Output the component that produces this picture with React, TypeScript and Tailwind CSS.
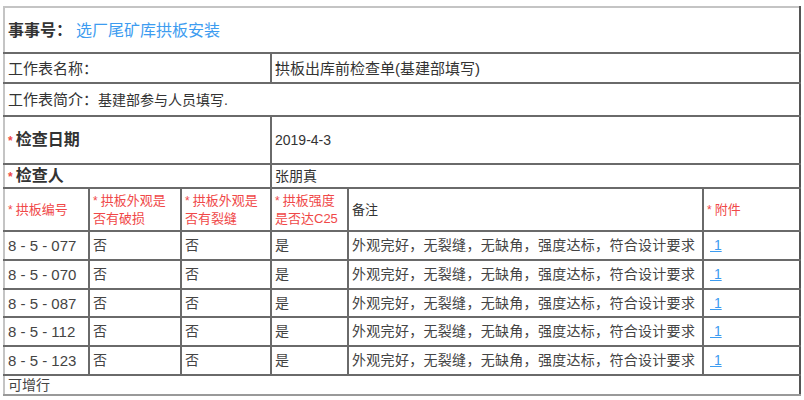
const rows = [
  { code: '8 - 5 - 077', h: 'h-[29px]' },
  { code: '8 - 5 - 070', h: 'h-[29px]' },
  { code: '8 - 5 - 087', h: 'h-[28px]' },
  { code: '8 - 5 - 112', h: 'h-[29px]' },
  { code: '8 - 5 - 123', h: 'h-[29px]' },
]

const note = '外观完好，无裂缝，无缺角，强度达标，符合设计要求'

function Star() {
  return <span className="mr-[3px] text-[12px] text-[#f04848]">*</span>
}

const cell = 'border-2 border-[#6a6a6a] px-[3px] align-middle'

function TwoLine({ a, b }: { a: string; b: string }) {
  return (
    <>
      <div className="whitespace-nowrap">
        <Star />
        {a}
      </div>
      <div className="whitespace-nowrap">{b}</div>
    </>
  )
}

export default function App() {
  return (
    <div
      className="h-[400px] w-[804px] overflow-hidden bg-white pl-[3px] pt-[6px] text-[#333]"
      style={{ fontFamily: '"Liberation Sans", "Noto Sans CJK SC", sans-serif' }}
    >
      <table className="w-[796px] table-fixed border-collapse border-t-2 border-l-2 border-t-[#c4c4c4] border-l-[#c4c4c4] text-[14px] leading-[17px]">
        <colgroup>
          <col className="w-[85px]" />
          <col className="w-[92px]" />
          <col className="w-[90px]" />
          <col className="w-[77px]" />
          <col className="w-[355px]" />
          <col className="w-[97px]" />
        </colgroup>
        <tbody>
          <tr className="h-[46px]">
            <td colSpan={6} className={`${cell} border-t-[#c4c4c4] border-l-[#c4c4c4] border-r-[#555] text-[16px]`}>
              <span className="font-semibold text-[#333]">事事号：</span>
              <span className="ml-[4px] text-[#3d9cf0]">选厂尾矿库拱板安装</span>
            </td>
          </tr>
          <tr className="h-[30px]">
            <td colSpan={3} className={`${cell} border-l-[#c4c4c4] text-[15px]`}>工作表名称：</td>
            <td colSpan={3} className={`${cell} border-r-[#555] text-[15px]`}>拱板出库前检查单(基建部填写)</td>
          </tr>
          <tr className="h-[33px]">
            <td colSpan={6} className={`${cell} border-l-[#c4c4c4] border-r-[#555]`}>
              <span className="text-[15px]">工作表简介：</span>基建部参与人员填写.
            </td>
          </tr>
          <tr className="h-[48px]">
            <td colSpan={3} className={`${cell} border-l-[#c4c4c4] text-[16px] font-bold`}>
              <Star />检查日期
            </td>
            <td colSpan={3} className={`${cell} border-r-[#555]`}>2019-4-3</td>
          </tr>
          <tr className="h-[24px]">
            <td colSpan={3} className={`${cell} border-l-[#c4c4c4] text-[16px] font-bold`}>
              <Star />检查人
            </td>
            <td colSpan={3} className={`${cell} border-r-[#555]`}>张朋真</td>
          </tr>
          <tr className="h-[43px] text-[13px] leading-[18px] text-[#f04848]">
            <td className={`${cell} border-l-[#c4c4c4]`}>
              <Star />拱板编号
            </td>
            <td className={cell}>
              <TwoLine a="拱板外观是" b="否有破损" />
            </td>
            <td className={cell}>
              <TwoLine a="拱板外观是" b="否有裂缝" />
            </td>
            <td className={cell}>
              <TwoLine a="拱板强度" b="是否达C25" />
            </td>
            <td className={`${cell} text-[#333]`}>备注</td>
            <td className={`${cell} border-r-[#555]`}>
              <Star />附件
            </td>
          </tr>
          {rows.map((r) => (
            <tr key={r.code} className={`${r.h} text-[#444]`}>
              <td className={`${cell} border-l-[#c4c4c4] text-[15px]`}>{r.code}</td>
              <td className={cell}>否</td>
              <td className={cell}>否</td>
              <td className={cell}>是</td>
              <td className={`${cell} whitespace-nowrap tracking-[0.3px]`}>{note}</td>
              <td className={`${cell} border-r-[#555] pl-[6px]`}>
                <a href="#" className="text-[#3d9cf0] underline">
                  &nbsp;1
                </a>
              </td>
            </tr>
          ))}
          <tr className="h-[20px]">
            <td colSpan={6} className={`${cell} border-l-[#c4c4c4] border-r-[#555] border-b-[#999] text-[#444]`}>
              可增行
            </td>
          </tr>
        </tbody>
      </table>
    </div>
  )
}
